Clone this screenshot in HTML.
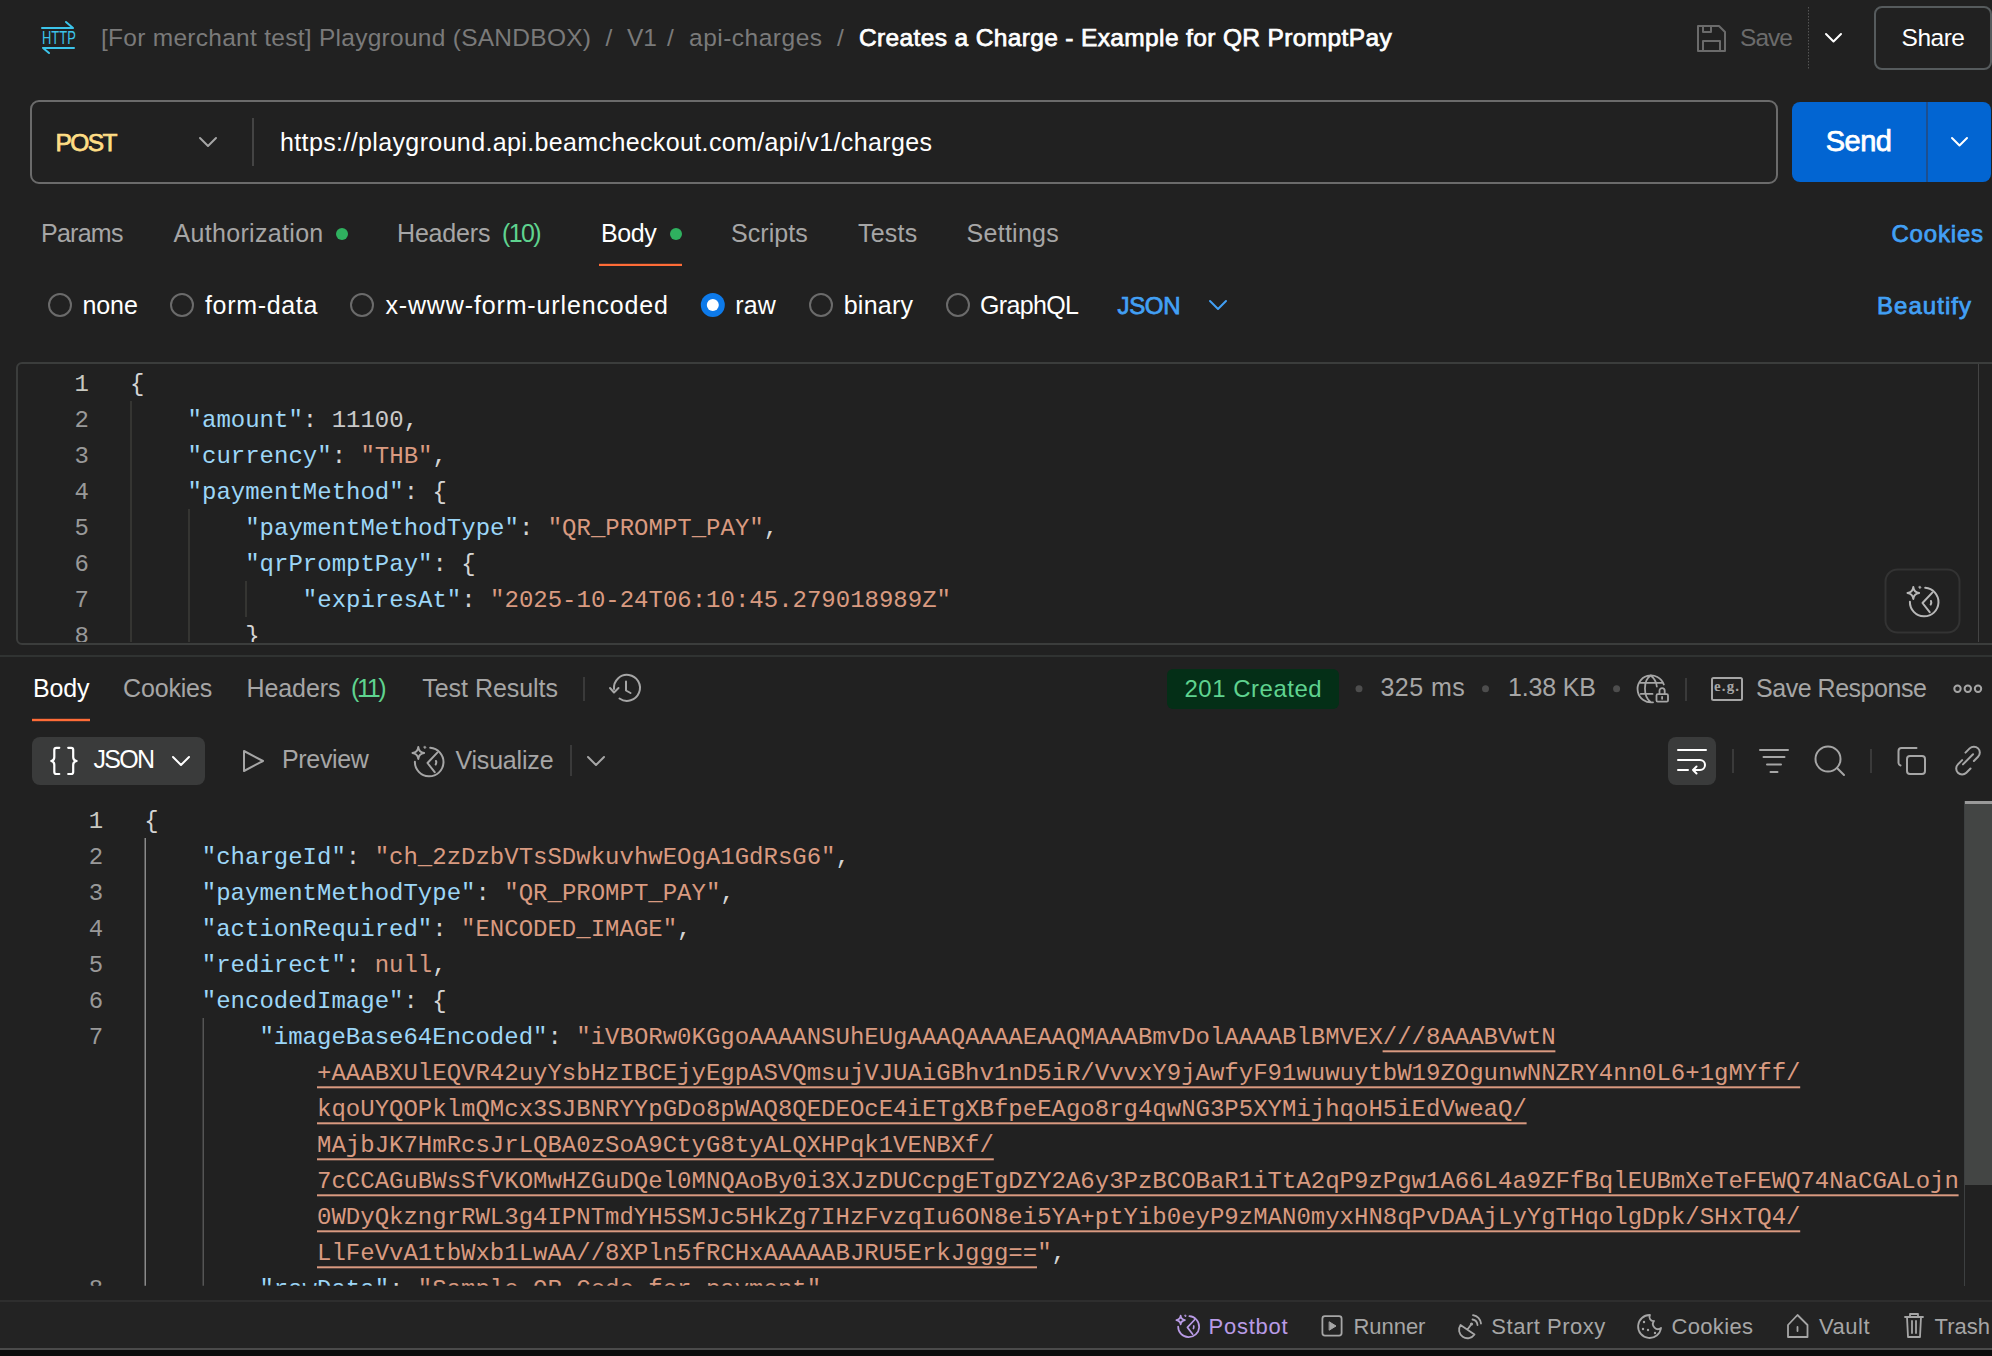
<!DOCTYPE html>
<html><head><meta charset="utf-8"><style>
html,body{margin:0;padding:0;background:#212121;overflow:hidden;width:1992px;height:1356px}
svg{display:block}
</style></head><body>
<svg width="1992" height="1356" viewBox="0 0 1992 1356">
<rect width="1992" height="1356" fill="#212121"/>
<path d="M42 28 H73 M66 22 L73 28" stroke="#3cc4ea" stroke-width="2" fill="none" stroke-linecap="round" stroke-linejoin="round" />
<g transform="translate(42,0) scale(0.72,1)">
<text x="0.00" y="44.50" font-family="Liberation Sans" font-size="18" font-weight="400" fill="#3cc4ea" >HTTP</text>
</g>
<path d="M43 48 H74 M43 48 L49 53" stroke="#3cc4ea" stroke-width="2" fill="none" stroke-linecap="round" stroke-linejoin="round" />
<text x="101.00" y="45.60" font-family="Liberation Sans" font-size="24.5" font-weight="400" fill="#7a7a7a" textLength="490.02" lengthAdjust="spacing" >[For merchant test] Playground (SANDBOX)</text>
<text x="605.50" y="45.60" font-family="Liberation Sans" font-size="24.5" font-weight="400" fill="#7a7a7a" textLength="6.93" lengthAdjust="spacing" >/</text>
<text x="627.00" y="45.60" font-family="Liberation Sans" font-size="24.5" font-weight="400" fill="#7a7a7a" >V1</text>
<text x="667.00" y="45.60" font-family="Liberation Sans" font-size="24.5" font-weight="400" fill="#7a7a7a" textLength="6.93" lengthAdjust="spacing" >/</text>
<text x="689.00" y="45.60" font-family="Liberation Sans" font-size="24.5" font-weight="400" fill="#7a7a7a" textLength="133.01" lengthAdjust="spacing" >api-charges</text>
<text x="837.00" y="45.60" font-family="Liberation Sans" font-size="24.5" font-weight="400" fill="#7a7a7a" textLength="6.53" lengthAdjust="spacing" >/</text>
<text x="859.00" y="45.60" font-family="Liberation Sans" font-size="24.5" font-weight="400" fill="#ffffff" textLength="532.63" lengthAdjust="spacing"  stroke="#ffffff" stroke-width="0.75">Creates a Charge - Example for QR PromptPay</text>
<path d="M1698 26 H1719 L1725 32 V51 H1698 Z M1703 26 V32 H1711 V26 M1703 51 V41 H1720 V51" stroke="#6b6b6b" stroke-width="2" fill="none" stroke-linecap="round" stroke-linejoin="round" />
<text x="1740.00" y="46.20" font-family="Liberation Sans" font-size="24.5" font-weight="400" fill="#6b6b6b" textLength="52.97" lengthAdjust="spacing" >Save</text>
<line x1="1808.5" y1="7" x2="1808.5" y2="70" stroke="#555" stroke-width="1" stroke-dasharray="1.5 1.5"/>
<path d="M1826 34 L1833.5 41.5 L1841 34" stroke="#ffffff" stroke-width="2" fill="none" stroke-linecap="round" stroke-linejoin="round" />
<rect x="1875" y="7" width="116" height="62" rx="7" fill="none" stroke="#565b5d" stroke-width="2"/>
<text x="1901.60" y="46.20" font-family="Liberation Sans" font-size="24.5" font-weight="400" fill="#ffffff" textLength="63.40" lengthAdjust="spacing" >Share</text>
<rect x="31" y="101" width="1746" height="82" rx="8" fill="none" stroke="#6b6b6b" stroke-width="2"/>
<text x="55.40" y="151.00" font-family="Liberation Sans" font-size="24.5" font-weight="400" fill="#ffde85" textLength="62.16" lengthAdjust="spacing"  stroke="#ffde85" stroke-width="0.75">POST</text>
<path d="M200 138 L208 146 L216 138" stroke="#a6a6a6" stroke-width="2" fill="none" stroke-linecap="round" stroke-linejoin="round" />
<rect x="252" y="118" width="2" height="48" rx="0" fill="#444"/>
<text x="280.00" y="151.00" font-family="Liberation Sans" font-size="25" font-weight="400" fill="#ffffff" textLength="651.95" lengthAdjust="spacing" >https://playground.api.beamcheckout.com/api/v1/charges</text>
<rect x="1792" y="102" width="199" height="80" rx="8" fill="#0265d2"/>
<rect x="1926" y="102" width="2" height="80" rx="0" fill="#1d4f8f"/>
<text x="1825.80" y="151.40" font-family="Liberation Sans" font-size="29" font-weight="400" fill="#ffffff" textLength="66.18" lengthAdjust="spacing"  stroke="#ffffff" stroke-width="0.75">Send</text>
<path d="M1952 138 L1959.5 145.5 L1967 138" stroke="#ffffff" stroke-width="2" fill="none" stroke-linecap="round" stroke-linejoin="round" />
<text x="41.00" y="242.20" font-family="Liberation Sans" font-size="25" font-weight="400" fill="#a6a6a6" textLength="82.41" lengthAdjust="spacing" >Params</text>
<text x="173.60" y="242.20" font-family="Liberation Sans" font-size="25" font-weight="400" fill="#a6a6a6" textLength="149.65" lengthAdjust="spacing" >Authorization</text>
<circle cx="342" cy="234.1" r="6" fill="#2fb15f"/>
<text x="397.00" y="242.20" font-family="Liberation Sans" font-size="25" font-weight="400" fill="#a6a6a6" textLength="93.40" lengthAdjust="spacing" >Headers</text>
<text x="502.00" y="242.20" font-family="Liberation Sans" font-size="25" font-weight="400" fill="#5fd38f" textLength="39.56" lengthAdjust="spacing" >(10)</text>
<text x="601.00" y="242.20" font-family="Liberation Sans" font-size="25" font-weight="400" fill="#ffffff" textLength="55.68" lengthAdjust="spacing" >Body</text>
<circle cx="676" cy="234.1" r="6" fill="#2fb15f"/>
<rect x="599" y="263.8" width="83" height="2.2" rx="0" fill="#ff6c37"/>
<text x="731.00" y="242.20" font-family="Liberation Sans" font-size="25" font-weight="400" fill="#a6a6a6" textLength="76.73" lengthAdjust="spacing" >Scripts</text>
<text x="858.00" y="242.20" font-family="Liberation Sans" font-size="25" font-weight="400" fill="#a6a6a6" textLength="59.17" lengthAdjust="spacing" >Tests</text>
<text x="966.60" y="242.20" font-family="Liberation Sans" font-size="25" font-weight="400" fill="#a6a6a6" textLength="92.16" lengthAdjust="spacing" >Settings</text>
<text x="1891.40" y="241.90" font-family="Liberation Sans" font-size="24" font-weight="400" fill="#42a0f5" textLength="91.66" lengthAdjust="spacing"  stroke="#42a0f5" stroke-width="0.75">Cookies</text>
<circle cx="60" cy="305" r="11" fill="none" stroke="#6b6b6b" stroke-width="2"/>
<circle cx="182" cy="305" r="11" fill="none" stroke="#6b6b6b" stroke-width="2"/>
<circle cx="362" cy="305" r="11" fill="none" stroke="#6b6b6b" stroke-width="2"/>
<circle cx="821" cy="305" r="11" fill="none" stroke="#6b6b6b" stroke-width="2"/>
<circle cx="958" cy="305" r="11" fill="none" stroke="#6b6b6b" stroke-width="2"/>
<circle cx="712.8" cy="305" r="12" fill="#0d7aea"/>
<circle cx="712.8" cy="305" r="6" fill="#ffffff"/>
<text x="82.60" y="314.00" font-family="Liberation Sans" font-size="25" font-weight="400" fill="#ffffff" textLength="55.19" lengthAdjust="spacing" >none</text>
<text x="205.00" y="314.00" font-family="Liberation Sans" font-size="25" font-weight="400" fill="#ffffff" textLength="112.36" lengthAdjust="spacing" >form-data</text>
<text x="385.40" y="314.00" font-family="Liberation Sans" font-size="25" font-weight="400" fill="#ffffff" textLength="282.58" lengthAdjust="spacing" >x-www-form-urlencoded</text>
<text x="735.30" y="314.00" font-family="Liberation Sans" font-size="25" font-weight="400" fill="#ffffff" textLength="40.61" lengthAdjust="spacing" >raw</text>
<text x="843.70" y="314.00" font-family="Liberation Sans" font-size="25" font-weight="400" fill="#ffffff" textLength="69.27" lengthAdjust="spacing" >binary</text>
<text x="980.00" y="314.00" font-family="Liberation Sans" font-size="25" font-weight="400" fill="#ffffff" textLength="98.96" lengthAdjust="spacing" >GraphQL</text>
<text x="1117.40" y="314.00" font-family="Liberation Sans" font-size="24" font-weight="400" fill="#42a0f5" textLength="63.21" lengthAdjust="spacing"  stroke="#42a0f5" stroke-width="0.75">JSON</text>
<path d="M1210 301 L1218 309 L1226 301" stroke="#42a0f5" stroke-width="2" fill="none" stroke-linecap="round" stroke-linejoin="round" />
<text x="1877.00" y="314.00" font-family="Liberation Sans" font-size="24" font-weight="400" fill="#42a0f5" textLength="94.07" lengthAdjust="spacing"  stroke="#42a0f5" stroke-width="0.75">Beautify</text>
<rect x="17" y="363" width="2000" height="281" rx="5" fill="none" stroke="#3b3d3c" stroke-width="2"/>
<line x1="1978.5" y1="364" x2="1978.5" y2="642" stroke="#444" stroke-width="1"/>
<clipPath id="creq"><rect x="18" y="364" width="1959" height="278"/></clipPath>
<g clip-path="url(#creq)">
<text x="74.62" y="391.20" font-family="Liberation Mono" font-size="24" font-weight="400" fill="#c8c8c0" >1</text>
<text x="130.00" y="391.20" font-family="Liberation Mono" font-size="24" xml:space="preserve" ><tspan fill="#d4d4d4">{</tspan></text>
<text x="74.62" y="427.20" font-family="Liberation Mono" font-size="24" font-weight="400" fill="#999999" >2</text>
<text x="130.00" y="427.20" font-family="Liberation Mono" font-size="24" xml:space="preserve" ><tspan fill="#d4d4d4">    </tspan><tspan fill="#9cd6f7">"amount"</tspan><tspan fill="#d4d4d4">:</tspan><tspan fill="#d4d4d4"> </tspan><tspan fill="#c9c9c9">11100</tspan><tspan fill="#d4d4d4">,</tspan></text>
<text x="74.62" y="463.20" font-family="Liberation Mono" font-size="24" font-weight="400" fill="#999999" >3</text>
<text x="130.00" y="463.20" font-family="Liberation Mono" font-size="24" xml:space="preserve" ><tspan fill="#d4d4d4">    </tspan><tspan fill="#9cd6f7">"currency"</tspan><tspan fill="#d4d4d4">:</tspan><tspan fill="#d4d4d4"> </tspan><tspan fill="#d99a80">"THB"</tspan><tspan fill="#d4d4d4">,</tspan></text>
<text x="74.62" y="499.20" font-family="Liberation Mono" font-size="24" font-weight="400" fill="#999999" >4</text>
<text x="130.00" y="499.20" font-family="Liberation Mono" font-size="24" xml:space="preserve" ><tspan fill="#d4d4d4">    </tspan><tspan fill="#9cd6f7">"paymentMethod"</tspan><tspan fill="#d4d4d4">:</tspan><tspan fill="#d4d4d4"> </tspan><tspan fill="#d4d4d4">{</tspan></text>
<text x="74.62" y="535.20" font-family="Liberation Mono" font-size="24" font-weight="400" fill="#999999" >5</text>
<text x="130.00" y="535.20" font-family="Liberation Mono" font-size="24" xml:space="preserve" ><tspan fill="#d4d4d4">        </tspan><tspan fill="#9cd6f7">"paymentMethodType"</tspan><tspan fill="#d4d4d4">:</tspan><tspan fill="#d4d4d4"> </tspan><tspan fill="#d99a80">"QR_PROMPT_PAY"</tspan><tspan fill="#d4d4d4">,</tspan></text>
<text x="74.62" y="571.20" font-family="Liberation Mono" font-size="24" font-weight="400" fill="#999999" >6</text>
<text x="130.00" y="571.20" font-family="Liberation Mono" font-size="24" xml:space="preserve" ><tspan fill="#d4d4d4">        </tspan><tspan fill="#9cd6f7">"qrPromptPay"</tspan><tspan fill="#d4d4d4">:</tspan><tspan fill="#d4d4d4"> </tspan><tspan fill="#d4d4d4">{</tspan></text>
<text x="74.62" y="607.20" font-family="Liberation Mono" font-size="24" font-weight="400" fill="#999999" >7</text>
<text x="130.00" y="607.20" font-family="Liberation Mono" font-size="24" xml:space="preserve" ><tspan fill="#d4d4d4">            </tspan><tspan fill="#9cd6f7">"expiresAt"</tspan><tspan fill="#d4d4d4">:</tspan><tspan fill="#d4d4d4"> </tspan><tspan fill="#d99a80">"2025-10-24T06:10:45.279018989Z"</tspan></text>
<text x="74.62" y="643.20" font-family="Liberation Mono" font-size="24" font-weight="400" fill="#999999" >8</text>
<text x="130.00" y="643.20" font-family="Liberation Mono" font-size="24" xml:space="preserve" ><tspan fill="#d4d4d4">        </tspan><tspan fill="#d4d4d4">}</tspan></text>
<rect x="130.5" y="401" width="1" height="242" rx="0" fill="#4a4a45"/>
<rect x="188.5" y="509" width="1" height="134" rx="0" fill="#4a4a45"/>
<rect x="245.5" y="581" width="1" height="36" rx="0" fill="#4a4a45"/>
</g>
<rect x="1885.5" y="569.5" width="74" height="63" rx="12" fill="none" stroke="#333" stroke-width="2"/>
<g transform="translate(1906.3,585.6) scale(1.0)" stroke="#b8b8b8" fill="none" stroke-width="2.00" stroke-linecap="round" stroke-linejoin="round">
<path d="M7 1.5 Q7.6 6.6 12.8 7.4 Q7.6 8.2 7 13.3 Q6.4 8.2 1.2 7.4 Q6.4 6.6 7 1.5 Z"/>
<path d="M13.6 0.6 L14.6 1.8 L13.6 3 L12.6 1.8 Z" fill="#b8b8b8" stroke-width="0.80"/>
<path d="M18.9 2.2 A14.3 14.3 0 1 1 3.6 16.2"/>
<path d="M26 7 L16.2 17.4 L23.4 26.6"/>
<path d="M24.7 15.4 Q25.4 17 24.4 18.9"/>
</g>
<rect x="0" y="655" width="1992" height="2" rx="0" fill="#303332"/>
<text x="33.00" y="697.20" font-family="Liberation Sans" font-size="25" font-weight="400" fill="#ffffff" textLength="56.38" lengthAdjust="spacing" >Body</text>
<rect x="32" y="718.8" width="58" height="2.4" rx="0" fill="#ff6c37"/>
<text x="123.00" y="697.20" font-family="Liberation Sans" font-size="25" font-weight="400" fill="#a6a6a6" textLength="89.35" lengthAdjust="spacing" >Cookies</text>
<text x="246.60" y="697.20" font-family="Liberation Sans" font-size="25" font-weight="400" fill="#a6a6a6" textLength="93.80" lengthAdjust="spacing" >Headers</text>
<text x="351.00" y="697.20" font-family="Liberation Sans" font-size="25" font-weight="400" fill="#5fd38f" textLength="35.48" lengthAdjust="spacing" >(11)</text>
<text x="422.30" y="697.20" font-family="Liberation Sans" font-size="25" font-weight="400" fill="#a6a6a6" textLength="135.73" lengthAdjust="spacing" >Test Results</text>
<rect x="583" y="677" width="2" height="24" rx="0" fill="#3a3a3a"/>
<path d="M619.5 698.5 A13 13 0 1 0 614 689" stroke="#a6a6a6" stroke-width="2" fill="none" stroke-linecap="round" stroke-linejoin="round" />
<path d="M610 688 L614 692.5 L618.5 688" stroke="#a6a6a6" stroke-width="2" fill="none" stroke-linecap="round" stroke-linejoin="round" />
<path d="M626 681.5 V690.5 L630.5 693" stroke="#a6a6a6" stroke-width="2" fill="none" stroke-linecap="round" stroke-linejoin="round" />
<rect x="1167" y="669" width="172" height="40" rx="6" fill="#042f17"/>
<text x="1184.50" y="696.60" font-family="Liberation Sans" font-size="24" font-weight="400" fill="#5fd38f" textLength="137.17" lengthAdjust="spacing" >201 Created</text>
<circle cx="1359" cy="688.7" r="3.5" fill="#4d4d4d"/>
<text x="1380.50" y="696.40" font-family="Liberation Sans" font-size="25" font-weight="400" fill="#a6a6a6" textLength="84.18" lengthAdjust="spacing" >325 ms</text>
<circle cx="1485.5" cy="688.7" r="3.5" fill="#4d4d4d"/>
<text x="1508.00" y="696.40" font-family="Liberation Sans" font-size="25" font-weight="400" fill="#a6a6a6" textLength="87.86" lengthAdjust="spacing" >1.38 KB</text>
<circle cx="1616.6" cy="688.7" r="3.5" fill="#4d4d4d"/>
<path d="M1653 702.3 A13.5 13.5 0 1 1 1663.8 684.5 M1640.5 682.8 H1662 M1640.8 693.9 H1652.5 M1650.8 675.5 C1643 680 1643 697 1650.8 702.2 M1650.8 675.5 C1655 679 1656.5 683 1656.8 686.5" stroke="#a6a6a6" stroke-width="1.8" fill="none" stroke-linecap="round" stroke-linejoin="round" />
<rect x="1656.5" y="694.2" width="11.5" height="7.5" rx="1.2" fill="none" stroke="#a6a6a6" stroke-width="1.8"/>
<path d="M1659.5 694.2 V690.8 A2.6 2.6 0 0 1 1664.7 690.8 V694.2 M1662.1 696.8 V698.8" stroke="#a6a6a6" stroke-width="1.8" fill="none" stroke-linecap="round" stroke-linejoin="round" />
<rect x="1685" y="678" width="2" height="23" rx="0" fill="#3a3a3a"/>
<rect x="1712" y="678" width="30" height="22" rx="1.5" fill="none" stroke="#a6a6a6" stroke-width="2"/>
<text x="1714" y="691.4" font-family="Liberation Serif" font-weight="700" font-size="15" fill="#a6a6a6" textLength="25" lengthAdjust="spacing">e.g.</text>
<text x="1756.00" y="696.80" font-family="Liberation Sans" font-size="25" font-weight="400" fill="#a6a6a6" textLength="170.81" lengthAdjust="spacing" >Save Response</text>
<circle cx="1957.5" cy="688.8" r="3.2" fill="none" stroke="#a6a6a6" stroke-width="2"/>
<circle cx="1967.8" cy="688.8" r="3.2" fill="none" stroke="#a6a6a6" stroke-width="2"/>
<circle cx="1978" cy="688.8" r="3.2" fill="none" stroke="#a6a6a6" stroke-width="2"/>
<rect x="32" y="737" width="173" height="48" rx="8" fill="#3a3b3b"/>
<path d="M59.3 747.8 H56.3 Q54.3 747.8 54.3 749.8 V757.3 Q54.3 760.3 51.3 761 Q54.3 761.7 54.3 764.7 V772 Q54.3 774 56.3 774 H59.3" stroke="#ffffff" stroke-width="2.2" fill="none" stroke-linecap="round" stroke-linejoin="round" />
<path d="M68.2 747.8 H71.2 Q73.2 747.8 73.2 749.8 V757.3 Q73.2 760.3 76.6 761 Q73.2 761.7 73.2 764.7 V772 Q73.2 774 71.2 774 H68.2" stroke="#ffffff" stroke-width="2.2" fill="none" stroke-linecap="round" stroke-linejoin="round" />
<text x="93.40" y="767.50" font-family="Liberation Sans" font-size="25" font-weight="400" fill="#ffffff" textLength="61.65" lengthAdjust="spacing" >JSON</text>
<path d="M173 757 L181 765 L189 757" stroke="#ffffff" stroke-width="2" fill="none" stroke-linecap="round" stroke-linejoin="round" />
<path d="M244 751 L263 761 L244 771 Z" stroke="#a6a6a6" stroke-width="2" fill="none" stroke-linecap="round" stroke-linejoin="round" />
<text x="282.00" y="767.50" font-family="Liberation Sans" font-size="25" font-weight="400" fill="#a6a6a6" textLength="86.92" lengthAdjust="spacing" >Preview</text>
<g transform="translate(411.3,745.6) scale(1.0)" stroke="#a6a6a6" fill="none" stroke-width="2.00" stroke-linecap="round" stroke-linejoin="round">
<path d="M7 1.5 Q7.6 6.6 12.8 7.4 Q7.6 8.2 7 13.3 Q6.4 8.2 1.2 7.4 Q6.4 6.6 7 1.5 Z"/>
<path d="M13.6 0.6 L14.6 1.8 L13.6 3 L12.6 1.8 Z" fill="#a6a6a6" stroke-width="0.80"/>
<path d="M18.9 2.2 A14.3 14.3 0 1 1 3.6 16.2"/>
<path d="M26 7 L16.2 17.4 L23.4 26.6"/>
<path d="M24.7 15.4 Q25.4 17 24.4 18.9"/>
</g>
<text x="455.40" y="768.70" font-family="Liberation Sans" font-size="25" font-weight="400" fill="#a6a6a6" textLength="98.18" lengthAdjust="spacing" >Visualize</text>
<rect x="570" y="745" width="2" height="31" rx="0" fill="#3a3a3a"/>
<path d="M588 757 L596 765 L604 757" stroke="#a6a6a6" stroke-width="2" fill="none" stroke-linecap="round" stroke-linejoin="round" />
<rect x="1668" y="737" width="48" height="48" rx="8" fill="#3a3b3b"/>
<path d="M1678 750 H1706 M1678 760 H1700 A5 5 0 0 1 1700 770 H1693 M1696.5 766.5 L1693 770 L1696.5 773.5 M1678 770 H1688" stroke="#ffffff" stroke-width="2" fill="none" stroke-linecap="round" stroke-linejoin="round" />
<rect x="1732" y="749" width="2" height="24" rx="0" fill="#3a3a3a"/>
<path d="M1760 750 H1788 M1763.5 757 H1784.5 M1767 764.5 H1781 M1770.5 772 H1777.5" stroke="#a6a6a6" stroke-width="2" fill="none" stroke-linecap="round" stroke-linejoin="round" />
<circle cx="1828" cy="759" r="12.5" fill="none" stroke="#a6a6a6" stroke-width="2"/>
<path d="M1837 768 L1844 775" stroke="#a6a6a6" stroke-width="2" fill="none" stroke-linecap="round" stroke-linejoin="round" />
<rect x="1870" y="749" width="2" height="24" rx="0" fill="#3a3a3a"/>
<path d="M1916.5 748 H1901.5 A3 3 0 0 0 1898.5 751 V763 A3 3 0 0 0 1900.5 765.5" stroke="#a6a6a6" stroke-width="2" fill="none" stroke-linecap="round" stroke-linejoin="round" />
<rect x="1907" y="756" width="18" height="18" rx="3" fill="none" stroke="#a6a6a6" stroke-width="2"/>
<g transform="translate(1968,761) scale(0.84) translate(-1968,-761)">
<path d="M1962 765 L1974 753" stroke="#a6a6a6" stroke-width="2.4" fill="none" stroke-linecap="round" stroke-linejoin="round" />
<path d="M1965 751 L1970 746 A6 6 0 0 1 1980 756 L1975 761 M1971 770 L1966 775 A6 6 0 0 1 1956 765 L1961 760" stroke="#a6a6a6" stroke-width="2.4" fill="none" stroke-linecap="round" stroke-linejoin="round" />
</g>
<clipPath id="cres"><rect x="0" y="790" width="1964" height="495.8"/></clipPath>
<g clip-path="url(#cres)">
<text x="88.72" y="828.30" font-family="Liberation Mono" font-size="24" font-weight="400" fill="#c8c8c0" >1</text>
<text x="144.20" y="828.30" font-family="Liberation Mono" font-size="24" xml:space="preserve" ><tspan fill="#d4d4d4">{</tspan></text>
<text x="88.72" y="864.30" font-family="Liberation Mono" font-size="24" font-weight="400" fill="#999999" >2</text>
<text x="144.20" y="864.30" font-family="Liberation Mono" font-size="24" xml:space="preserve" ><tspan fill="#d4d4d4">    </tspan><tspan fill="#9cd6f7">"chargeId"</tspan><tspan fill="#d4d4d4">:</tspan><tspan fill="#d4d4d4"> </tspan><tspan fill="#d99a80">"ch_2zDzbVTsSDwkuvhwEOgA1GdRsG6"</tspan><tspan fill="#d4d4d4">,</tspan></text>
<text x="88.72" y="900.30" font-family="Liberation Mono" font-size="24" font-weight="400" fill="#999999" >3</text>
<text x="144.20" y="900.30" font-family="Liberation Mono" font-size="24" xml:space="preserve" ><tspan fill="#d4d4d4">    </tspan><tspan fill="#9cd6f7">"paymentMethodType"</tspan><tspan fill="#d4d4d4">:</tspan><tspan fill="#d4d4d4"> </tspan><tspan fill="#d99a80">"QR_PROMPT_PAY"</tspan><tspan fill="#d4d4d4">,</tspan></text>
<text x="88.72" y="936.30" font-family="Liberation Mono" font-size="24" font-weight="400" fill="#999999" >4</text>
<text x="144.20" y="936.30" font-family="Liberation Mono" font-size="24" xml:space="preserve" ><tspan fill="#d4d4d4">    </tspan><tspan fill="#9cd6f7">"actionRequired"</tspan><tspan fill="#d4d4d4">:</tspan><tspan fill="#d4d4d4"> </tspan><tspan fill="#d99a80">"ENCODED_IMAGE"</tspan><tspan fill="#d4d4d4">,</tspan></text>
<text x="88.72" y="972.30" font-family="Liberation Mono" font-size="24" font-weight="400" fill="#999999" >5</text>
<text x="144.20" y="972.30" font-family="Liberation Mono" font-size="24" xml:space="preserve" ><tspan fill="#d4d4d4">    </tspan><tspan fill="#9cd6f7">"redirect"</tspan><tspan fill="#d4d4d4">:</tspan><tspan fill="#d4d4d4"> </tspan><tspan fill="#d99a80">null</tspan><tspan fill="#d4d4d4">,</tspan></text>
<text x="88.72" y="1008.30" font-family="Liberation Mono" font-size="24" font-weight="400" fill="#999999" >6</text>
<text x="144.20" y="1008.30" font-family="Liberation Mono" font-size="24" xml:space="preserve" ><tspan fill="#d4d4d4">    </tspan><tspan fill="#9cd6f7">"encodedImage"</tspan><tspan fill="#d4d4d4">:</tspan><tspan fill="#d4d4d4"> </tspan><tspan fill="#d4d4d4">{</tspan></text>
<text x="88.72" y="1044.30" font-family="Liberation Mono" font-size="24" font-weight="400" fill="#999999" >7</text>
<text x="144.20" y="1044.30" font-family="Liberation Mono" font-size="24" xml:space="preserve" ><tspan fill="#d4d4d4">        </tspan><tspan fill="#9cd6f7">"imageBase64Encoded"</tspan><tspan fill="#d4d4d4">: </tspan><tspan fill="#d99a80">"iVBORw0KGgoAAAANSUhEUgAAAQAAAAEAAQMAAABmvDolAAAABlBMVEX</tspan><tspan fill="#d99a80">///8AAABVwtN</tspan></text>
<rect x="1382.6" y="1050.3" width="172.8" height="2" rx="0" fill="#d99a80"/>
<text x="144.20" y="1080.30" font-family="Liberation Mono" font-size="24" xml:space="preserve" ><tspan fill="#d4d4d4">            </tspan><tspan fill="#d99a80">+AAABXUlEQVR42uyYsbHzIBCEjyEgpASVQmsujVJUAiGBhv1nD5iR/VvvxY9jAwfyF91wuwuytbW19ZOgunwNNZRY4nn0L6+1gMYff/</tspan></text>
<rect x="317.0" y="1086.3" width="1483.2" height="2" rx="0" fill="#d99a80"/>
<text x="144.20" y="1116.30" font-family="Liberation Mono" font-size="24" xml:space="preserve" ><tspan fill="#d4d4d4">            </tspan><tspan fill="#d99a80">kqoUYQOPklmQMcx3SJBNRYYpGDo8pWAQ8QEDEOcE4iETgXBfpeEAgo8rg4qwNG3P5XYMijhqoH5iEdVweaQ/</tspan></text>
<rect x="317.0" y="1122.3" width="1209.6" height="2" rx="0" fill="#d99a80"/>
<text x="144.20" y="1152.30" font-family="Liberation Mono" font-size="24" xml:space="preserve" ><tspan fill="#d4d4d4">            </tspan><tspan fill="#d99a80">MAjbJK7HmRcsJrLQBA0zSoA9CtyG8tyALQXHPqk1VENBXf/</tspan></text>
<rect x="317.0" y="1158.3" width="676.8" height="2" rx="0" fill="#d99a80"/>
<text x="144.20" y="1188.30" font-family="Liberation Mono" font-size="24" xml:space="preserve" ><tspan fill="#d4d4d4">            </tspan><tspan fill="#d99a80">7cCCAGuBWsSfVKOMwHZGuDQel0MNQAoBy0i3XJzDUCcpgETgDZY2A6y3PzBCOBaR1iTtA2qP9zPgw1A66L4a9ZFfBqlEUBmXeTeFEWQ74NaCGALojn</tspan></text>
<rect x="317.0" y="1194.3" width="1641.6" height="2" rx="0" fill="#d99a80"/>
<text x="144.20" y="1224.30" font-family="Liberation Mono" font-size="24" xml:space="preserve" ><tspan fill="#d4d4d4">            </tspan><tspan fill="#d99a80">0WDyQkzngrRWL3g4IPNTmdYH5SMJc5HkZg7IHzFvzqIu6ON8ei5YA+ptYib0eyP9zMAN0myxHN8qPvDAAjLyYgTHqolgDpk/SHxTQ4/</tspan></text>
<rect x="317.0" y="1230.3" width="1483.2" height="2" rx="0" fill="#d99a80"/>
<text x="144.20" y="1260.30" font-family="Liberation Mono" font-size="24" xml:space="preserve" ><tspan fill="#d4d4d4">            </tspan><tspan fill="#d99a80">LlFeVvA1tbWxb1LwAA//8XPln5fRCHxAAAAABJRU5ErkJggg==</tspan><tspan fill="#d99a80">"</tspan><tspan fill="#d4d4d4">,</tspan></text>
<rect x="317.0" y="1266.3" width="720.0" height="2" rx="0" fill="#d99a80"/>
<text x="88.72" y="1296.30" font-family="Liberation Mono" font-size="24" font-weight="400" fill="#999999" >8</text>
<text x="144.20" y="1296.30" font-family="Liberation Mono" font-size="24" xml:space="preserve" ><tspan fill="#d4d4d4">        </tspan><tspan fill="#9cd6f7">"rawData"</tspan><tspan fill="#d4d4d4">:</tspan><tspan fill="#d4d4d4"> </tspan><tspan fill="#d99a80">"Sample QR Code for payment"</tspan></text>
<rect x="144.5" y="838" width="1.5" height="448" rx="0" fill="#8a8a8a"/>
<rect x="202.5" y="1018" width="1.5" height="268" rx="0" fill="#555555"/>
</g>
<rect x="1964" y="801" width="1" height="485" rx="0" fill="#3d4041"/>
<rect x="1965" y="801" width="27" height="384" rx="0" fill="#434544"/>
<rect x="1965" y="801" width="27" height="3" rx="0" fill="#9a9a9a"/>
<rect x="0" y="1300" width="1992" height="2" rx="0" fill="#2e2e2e"/>
<rect x="0" y="1302" width="1992" height="46" rx="0" fill="#232323"/>
<rect x="0" y="1348" width="1992" height="2" rx="0" fill="#4a4a4a"/>
<rect x="0" y="1350" width="1992" height="6" rx="0" fill="#0c0c0c"/>
<g transform="translate(1175.5,1314.6) scale(0.735)" stroke="#b99be6" fill="none" stroke-width="2.31" stroke-linecap="round" stroke-linejoin="round">
<path d="M7 1.5 Q7.6 6.6 12.8 7.4 Q7.6 8.2 7 13.3 Q6.4 8.2 1.2 7.4 Q6.4 6.6 7 1.5 Z"/>
<path d="M13.6 0.6 L14.6 1.8 L13.6 3 L12.6 1.8 Z" fill="#b99be6" stroke-width="1.09"/>
<path d="M18.9 2.2 A14.3 14.3 0 1 1 3.6 16.2"/>
<path d="M26 7 L16.2 17.4 L23.4 26.6"/>
<path d="M24.7 15.4 Q25.4 17 24.4 18.9"/>
</g>
<text x="1208.50" y="1334.00" font-family="Liberation Sans" font-size="22" font-weight="400" fill="#b99be6" textLength="79.18" lengthAdjust="spacing" >Postbot</text>
<rect x="1322.4" y="1316.2" width="19.2" height="19.4" rx="2.5" fill="none" stroke="#a6a6a6" stroke-width="1.8"/>
<path d="M1329.5 1322 L1336 1326 L1329.5 1330 Z" stroke="#a6a6a6" stroke-width="1" fill="#a6a6a6" stroke-linecap="round" stroke-linejoin="round" />
<text x="1353.50" y="1334.00" font-family="Liberation Sans" font-size="22" font-weight="400" fill="#a6a6a6" textLength="71.94" lengthAdjust="spacing" >Runner</text>
<path d="M1460.5 1325 L1474.5 1334.5 A8.45 8.45 0 0 1 1460.5 1325 Z M1467.5 1329.5 L1471.5 1324 M1472.5 1319.5 A6 6 0 0 1 1477.5 1325 M1473 1315.2 A10 10 0 0 1 1481 1323.5" stroke="#a6a6a6" stroke-width="1.8" fill="none" stroke-linecap="round" stroke-linejoin="round" />
<circle cx="1471.5" cy="1324" r="1.6" fill="#a6a6a6"/>
<text x="1491.30" y="1334.00" font-family="Liberation Sans" font-size="22" font-weight="400" fill="#a6a6a6" textLength="114.04" lengthAdjust="spacing" >Start Proxy</text>
<path d="M1650 1315 A11.5 11.5 0 1 0 1661 1328 A5 5 0 0 1 1654 1321 A4 4 0 0 1 1650 1315 Z" stroke="#a6a6a6" stroke-width="1.8" fill="none" stroke-linecap="round" stroke-linejoin="round" />
<circle cx="1644" cy="1322" r="1.2" fill="#a6a6a6"/>
<circle cx="1648" cy="1330" r="1.2" fill="#a6a6a6"/>
<circle cx="1655" cy="1333" r="1.2" fill="#a6a6a6"/>
<circle cx="1643" cy="1329" r="1.2" fill="#a6a6a6"/>
<text x="1671.40" y="1334.00" font-family="Liberation Sans" font-size="22" font-weight="400" fill="#a6a6a6" textLength="81.59" lengthAdjust="spacing" >Cookies</text>
<path d="M1788 1325 L1797.5 1315 L1807.5 1325 V1337 H1788 Z M1797.5 1327 V1331" stroke="#a6a6a6" stroke-width="1.8" fill="none" stroke-linecap="round" stroke-linejoin="round" />
<text x="1819.00" y="1334.00" font-family="Liberation Sans" font-size="22" font-weight="400" fill="#a6a6a6" textLength="50.52" lengthAdjust="spacing" >Vault</text>
<path d="M1905 1317 H1923 M1910 1317 V1314 H1918 V1317 M1907 1317 L1908 1337 H1920 L1921 1317 M1912 1321 V1333 M1916 1321 V1333" stroke="#a6a6a6" stroke-width="1.8" fill="none" stroke-linecap="round" stroke-linejoin="round" />
<text x="1934.60" y="1334.00" font-family="Liberation Sans" font-size="22" font-weight="400" fill="#a6a6a6" >Trash</text>
</svg>
</body></html>
